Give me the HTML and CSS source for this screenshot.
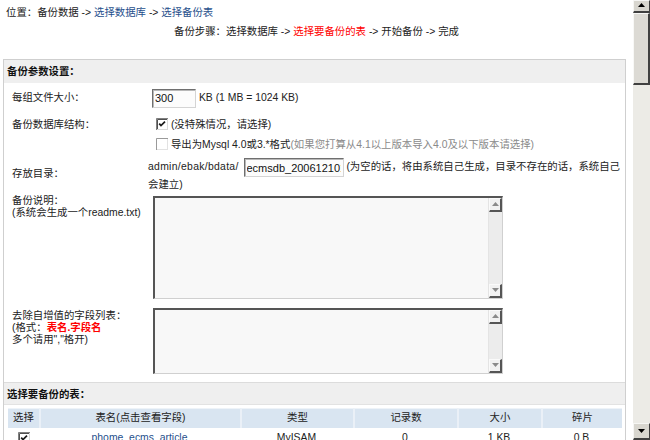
FILE: index.html
```html
<!DOCTYPE html>
<html lang="zh-CN">
<head>
<meta charset="utf-8">
<title>选择备份表</title>
<link rel="stylesheet" href="styles.css">
</head>
<body>
<div class="window">
  <main class="content">
    <div class="crumb">位置：备份数据 -&gt; <a href="#">选择数据库</a> -&gt; <a href="#">选择备份表</a></div>
    <div class="steps">备份步骤：选择数据库 -&gt; <span class="cur">选择要备份的表</span> -&gt; 开始备份 -&gt; 完成</div>
    <table class="frame">
      <colgroup><col class="c-lbl"><col></colgroup>
      <tr class="band"><td colspan="2">备份参数设置：</td></tr>
      <tr class="r1">
        <td class="lbl">每组文件大小：</td>
        <td class="val"><input class="txt w-size" type="text" value="300"> KB (1 MB = 1024 KB)</td>
      </tr>
      <tr class="r2">
        <td class="lbl">备份数据库结构：</td>
        <td class="val"><span class="cb"><svg width="12" height="12" viewBox="0 0 12 12"><rect x="0" y="0" width="12" height="12" fill="#d9d9d9"/><rect x="1" y="1" width="10" height="10" fill="#fff"/><path d="M0.5 12V0.5H12" fill="none" stroke="#808080"/><path d="M1.5 11V1.5H11" fill="none" stroke="#505050"/><path d="M3.2 5.6L5 7.6L9 3.6" fill="none" stroke="#1a1a1a" stroke-width="1.7"/></svg></span> (没特殊情况，请选择)</td>
      </tr>
      <tr class="r3">
        <td class="lbl"></td>
        <td class="val"><span class="cb"><svg width="12" height="12" viewBox="0 0 12 12"><rect x="0" y="0" width="12" height="12" fill="#e2e2e2"/><rect x="1" y="1" width="10" height="10" fill="#fff"/><path d="M0.5 12V0.5H12" fill="none" stroke="#9a9a9a"/></svg></span> 导出为Mysql 4.0或3.*格式<span class="gray">(如果您打算从4.1以上版本导入4.0及以下版本请选择)</span></td>
      </tr>
      <tr class="r4">
        <td class="lbl mid">存放目录：</td>
        <td class="val"><span class="path">admin/ebak/bdata/</span> <input class="txt w-dir" type="text" value="ecmsdb_20061210110"> <span class="note">(为空的话，将由系统自己生成，目录不存在的话，系统自己会建立)</span></td>
      </tr>
      <tr class="r5">
        <td class="lbl top">备份说明：<br>(系统会生成一个readme.txt)</td>
        <td class="val">
          <div class="ta h-readme">
            <textarea></textarea>
            <div class="tsb">
              <span class="tbtn"><svg width="7" height="4" viewBox="0 0 7 4"><path d="M0 4L3.5 0L7 4Z" fill="#8a8a8a"/></svg></span>
              <span class="ttrack"></span>
              <span class="tbtn"><svg width="7" height="4" viewBox="0 0 7 4"><path d="M0 0L3.5 4L7 0Z" fill="#8a8a8a"/></svg></span>
            </div>
          </div>
        </td>
      </tr>
      <tr class="r6">
        <td class="lbl top">去除自增值的字段列表：<br>(格式：<b class="red">表名.字段名</b><br>多个请用","格开)</td>
        <td class="val">
          <div class="ta h-fields">
            <textarea></textarea>
            <div class="tsb">
              <span class="tbtn"><svg width="7" height="4" viewBox="0 0 7 4"><path d="M0 4L3.5 0L7 4Z" fill="#8a8a8a"/></svg></span>
              <span class="ttrack"></span>
              <span class="tbtn"><svg width="7" height="4" viewBox="0 0 7 4"><path d="M0 0L3.5 4L7 0Z" fill="#8a8a8a"/></svg></span>
            </div>
          </div>
        </td>
      </tr>
      <tr class="band band2"><td colspan="2">选择要备份的表：</td></tr>
      <tr class="r-list">
        <td colspan="2" class="list-cell">
          <table class="list">
            <colgroup><col class="k1"><col class="k2"><col class="k3"><col class="k4"><col class="k5"><col class="k6"></colgroup>
            <tr class="lh"><th>选择</th><th>表名(点击查看字段)</th><th>类型</th><th>记录数</th><th>大小</th><th>碎片</th></tr>
            <tr class="ld">
              <td><span class="cb"><svg width="12" height="12" viewBox="0 0 12 12"><rect x="0" y="0" width="12" height="12" fill="#d9d9d9"/><rect x="1" y="1" width="10" height="10" fill="#fff"/><path d="M0.5 12V0.5H12" fill="none" stroke="#808080"/><path d="M1.5 11V1.5H11" fill="none" stroke="#505050"/><path d="M3.2 5.6L5 7.6L9 3.6" fill="none" stroke="#1a1a1a" stroke-width="1.7"/></svg></span></td>
              <td><a href="#">phome_ecms_article</a></td>
              <td>MyISAM</td>
              <td>0</td>
              <td>1 KB</td>
              <td>0 B</td>
            </tr>
          </table>
        </td>
      </tr>
    </table>
  </main>
  <div class="vscroll">
    <span class="sbtn up"><svg width="7" height="4" viewBox="0 0 7 4"><path d="M0 4L3.5 0L7 4Z" fill="#000"/></svg></span>
    <span class="thumb"></span>
    <span class="strack"></span>
    <span class="sbtn down"><svg width="7" height="4" viewBox="0 0 7 4"><path d="M0 0L3.5 4L7 0Z" fill="#000"/></svg></span>
  </div>
</div>
</body>
</html>
```
FILE: styles.css
```css
* { box-sizing: border-box; }
html, body { margin: 0; padding: 0; }
body {
  width: 650px;
  height: 440px;
  overflow: hidden;
  background: #fff;
  color: #222;
  font-family: "Liberation Sans", "Noto Sans CJK SC", sans-serif;
  font-size: 10.4px;
  line-height: 1.2;
}
.window { display: flex; height: 440px; }
.content { flex: 1; min-width: 0; overflow: hidden; }

.crumb { padding: 4px 0 0 6px; line-height: 18px; }
.crumb a, .list a { color: #1f4f8c; text-decoration: none; }
.steps { margin-top: 1px; line-height: 18px; text-align: center; }
.cur, .red { color: #f00; }
.gray { color: #8a8a8a; }

.frame {
  margin: 18px 0 0 3px;
  width: 623px;
  border: 1px solid #cfcfcf;
  border-spacing: 0;
}
.c-lbl { width: 141px; }
.frame td { padding: 0; vertical-align: middle; }
.band td {
  background: #efefef;
  height: 22px;
  line-height: 23px;
  padding: 0 3px;
  font-weight: bold;
  color: #111;
}
.band2 td {
  border-top: 1px solid #dcdcdc;
  border-bottom: 1px solid #e2e2e2;
  height: 22px;
  line-height: 19px;
  padding-top: 2px;
}
.frame td.lbl { padding-left: 8px; }
.frame td.val { padding-left: 3px; padding-right: 4px; }
.frame td.top { vertical-align: top; line-height: 12px; }

.r1 td { padding-top: 5px; padding-bottom: 3px; line-height: 19px; }
.r2 td { padding-top: 4px; line-height: 20px; }
.r3 td { line-height: 20px; }
.r4 td.val { padding-top: 3px; padding-bottom: 1px; line-height: 16px; }
.r4 .path { letter-spacing: 0.3px; }
.r5 td.val { padding-top: 2px; padding-bottom: 4px; }
.r5 td.top { padding-top: 1px; }
.r6 td.val { padding-top: 5px; padding-bottom: 8px; }
.r6 td.top { padding-top: 7px; }

.txt {
  height: 19px;
  margin: 0 0 0 4px;
  padding: 1px 2px 0;
  vertical-align: middle;
  font: inherit;
  font-size: 11px;
  color: #111;
  background: #fcfcfc;
  border: 1px solid;
  border-color: #6f6f6f #d4d4d4 #d4d4d4 #6f6f6f;
  box-shadow: inset 1px 1px 0 #b8b8b8;
  outline: none;
}
.w-size { width: 44px; }
.w-dir { width: 100px; margin-left: 2px; }

.cb { display: inline-block; width: 12px; height: 12px; margin-left: 8px; vertical-align: -2px; line-height: 0; }
.cb svg { display: block; }

.ta {
  display: flex;
  width: 350px;
  margin-left: 5px;
  border-style: solid;
  border-width: 2px 1px 1px 2px;
  border-color: #555 #d0d0d0 #d0d0d0 #555;
  background: #f8f8f8;
}
.h-readme { height: 103px; }
.h-fields { height: 66px; }
.ta textarea {
  flex: 1;
  min-width: 0;
  border: 0;
  margin: 0;
  padding: 2px;
  resize: none;
  background: #f8f8f8;
  font: inherit;
  outline: none;
}
.tsb { width: 14px; display: flex; flex-direction: column; background: #ececec; border-left: 1px solid #e4e4e4; }
.tbtn {
  height: 14px;
  display: flex;
  align-items: center;
  justify-content: center;
  background: #f1f1f1;
  border-style: solid;
  border-width: 1px 2px 2px 1px;
  border-color: #fafafa #555 #555 #fafafa;
}
.ttrack { flex: 1; }

.list-cell { padding: 3px 3px 0 4px !important; }
.list { width: 614px; border-spacing: 0; table-layout: fixed; }
.k1 { width: 31px; } .k2 { width: 201px; } .k3 { width: 113px; }
.k4 { width: 104px; } .k5 { width: 84px; } .k6 { width: 81px; }
.list th {
  height: 20px;
  padding: 0;
  font-weight: normal;
  text-align: center;
  background: #d9e5f1;
  border-top: 1px solid #eef3f8;
}
.list th + th { border-left: 2px solid #eaf0f7; }
.list td { height: 22px; padding: 4px 0 0; text-align: center; vertical-align: top; }
.ld .cb { margin-left: 0; }

.vscroll {
  width: 17px;
  flex: none;
  display: flex;
  flex-direction: column;
  background: #ecebe6;
}
.sbtn {
  display: flex;
  justify-content: center;
  background: #d8d6cf;
  border-style: solid;
  border-width: 1px 1px 2px 1px;
  border-color: #f6f6f4 #404040 #404040 #f6f6f4;
}
.sbtn.up { height: 13px; align-items: flex-start; padding-top: 2px; }
.sbtn.down { height: 17px; align-items: center; }
.thumb {
  height: 72px;
  background: #dcdad4;
  border-style: solid;
  border-width: 1px 2px 2px 1px;
  border-color: #f8f8f6 #404040 #404040 #f8f8f6;
}
.strack { flex: 1; }
```
